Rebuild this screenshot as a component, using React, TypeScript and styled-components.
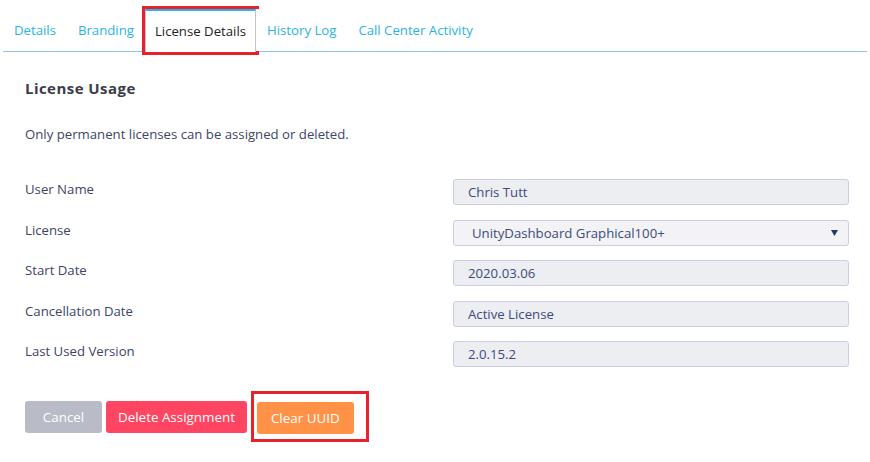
import { FC, Fragment } from 'react'
import styled, { createGlobalStyle } from 'styled-components'

const font = '"Open Sans", "Noto Sans", sans-serif'

const GlobalStyle = createGlobalStyle`
  html, body {
    margin: 0;
    padding: 0;
    background: #ffffff;
    font-family: ${font};
  }
`

const Page = styled.div`
  width: 870px;
  height: 462px;
  overflow: hidden;
  background: #ffffff;
`

const TabBar = styled.div`
  display: flex;
  align-items: flex-end;
  height: 52px;
  margin: 0 3px;
  border-bottom: 1px solid #8fc6ee;
  box-sizing: border-box;
`

const Tab = styled.div<{ active?: boolean }>`
  display: flex;
  align-items: center;
  height: ${({ active }) => (active ? '43px' : '42px')};
  padding: 0 ${({ active }) => (active ? '9px' : '11px')} 1px;
  margin-bottom: ${({ active }) => (active ? '-1px' : '0')};
  font-size: 13.2px;
  color: ${({ active }) => (active ? '#222222' : '#2ab4e6')};
  background: #ffffff;
  box-sizing: border-box;
  border: ${({ active }) => (active ? '1px solid #c4c4c8' : 'none')};
  border-top: ${({ active }) => (active ? '2px solid #2ab4ec' : 'none')};
  border-bottom: none;
  outline: ${({ active }) => (active ? '3px solid #e8222b' : 'none')};
`

const Content = styled.div`
  padding: 0 21px 0 25px;
`

const Heading = styled.h3`
  margin: 26px 0 0;
  font-size: 15px;
  line-height: 20px;
  font-weight: 700;
  letter-spacing: 0.45px;
  color: #3a3c48;
`

const Note = styled.p`
  margin: 26px 0 0;
  font-size: 13.2px;
  line-height: 20px;
  color: #3e4468;
`

const Form = styled.div`
  display: grid;
  grid-template-columns: 428px 1fr;
  row-gap: 14.5px;
  margin-top: 35px;
`

const Label = styled.div`
  font-size: 13.2px;
  line-height: 20px;
  color: #3e4468;
`

const Field = styled.div<{ select?: boolean }>`
  display: flex;
  align-items: center;
  justify-content: space-between;
  height: 26px;
  box-sizing: border-box;
  padding: 0 10px 0 ${({ select }) => (select ? '18px' : '14px')};
  border: 1px solid #c9cde6;
  border-radius: 3px;
  background: ${({ select }) => (select ? '#f3f3f5' : '#eceef2')};
  font-size: 13.2px;
  color: #3e4a7c;
`

const Arrow = styled.svg`
  width: 7px;
  height: 6px;
`

const Actions = styled.div`
  display: flex;
  align-items: center;
  gap: 4px;
  margin-top: 24px;
`

const Button = styled.button<{ color: string; minWidth?: number; pad?: number }>`
  height: 32px;
  min-width: ${({ minWidth }) => (minWidth ? `${minWidth}px` : 'auto')};
  padding: 0 ${({ pad }) => pad ?? 0}px;
  border: none;
  border-radius: 3px;
  background: ${({ color }) => color};
  color: #ffffff;
  font-family: ${font};
  font-size: 13.4px;
  cursor: pointer;
`

const Highlight = styled.div`
  display: flex;
  padding: 8px 12px 5px 3px;
  border: 3px solid #e8222b;
`

const tabs = ['Details', 'Branding', 'License Details', 'History Log', 'Call Center Activity']

const rows: { label: string; value: string; select?: boolean }[] = [
  { label: 'User Name', value: 'Chris Tutt' },
  { label: 'License', value: 'UnityDashboard Graphical100+', select: true },
  { label: 'Start Date', value: '2020.03.06' },
  { label: 'Cancellation Date', value: 'Active License' },
  { label: 'Last Used Version', value: '2.0.15.2' },
]

const App: FC = () => {
  return (
    <>
      <GlobalStyle />
      <Page>
        <TabBar>
          {tabs.map((t) => (
            <Tab key={t} active={t === 'License Details'}>
              {t}
            </Tab>
          ))}
        </TabBar>
        <Content>
          <Heading>License Usage</Heading>
          <Note>Only permanent licenses can be assigned or deleted.</Note>
          <Form>
            {rows.map((r) => (
              <Fragment key={r.label}>
                <Label>{r.label}</Label>
                <Field select={r.select}>
                  <span>{r.value}</span>
                  {r.select && (
                    <Arrow viewBox="0 0 7 6">
                      <path d="M0 0 L7 0 L3.5 6 Z" fill="#2c3566" />
                    </Arrow>
                  )}
                </Field>
              </Fragment>
            ))}
          </Form>
          <Actions>
            <Button color="#b9bcc6" minWidth={77}>Cancel</Button>
            <Button color="#ff4562" pad={12}>Delete Assignment</Button>
            <Highlight>
              <Button color="#ff9247" pad={14}>Clear UUID</Button>
            </Highlight>
          </Actions>
        </Content>
      </Page>
    </>
  )
}

export default App
